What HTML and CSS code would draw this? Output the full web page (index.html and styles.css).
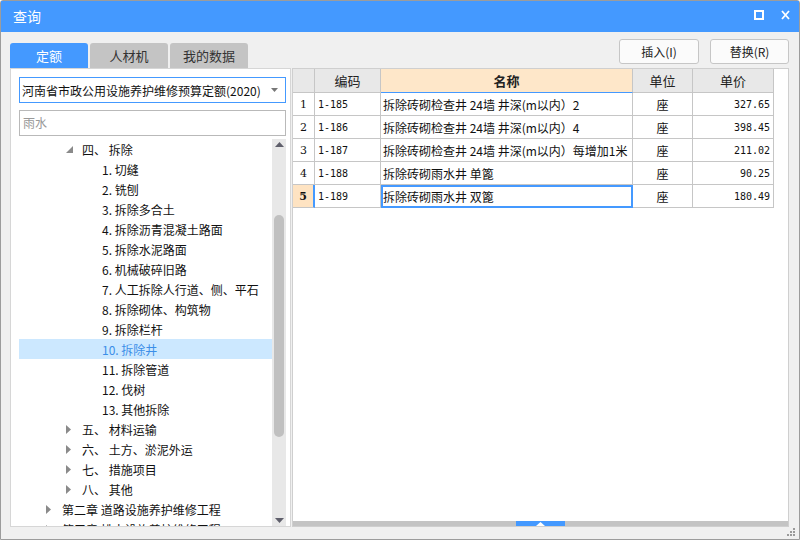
FILE: index.html
```html
<!DOCTYPE html>
<html lang="zh-CN">
<head>
<meta charset="utf-8">
<title>查询</title>
<link rel="stylesheet" href="styles.css">
</head>
<body>
<div class="win">
  <div class="titlebar">
    <span class="title">查询</span>
    <div class="tb-btns">
      <svg width="10" height="10" viewBox="0 0 10 10"><rect x="1" y="1" width="8" height="8" fill="none" stroke="#fff" stroke-width="2"/></svg>
      <svg width="9" height="10" viewBox="0 0 9 10"><path d="M1 1 L8 9 M8 1 L1 9" stroke="#fff" stroke-width="1.8" fill="none"/></svg>
    </div>
  </div>

  <div class="toolbar">
    <div class="tabs">
      <div class="tab active">定额</div>
      <div class="tab">人材机</div>
      <div class="tab">我的数据</div>
    </div>
    <div class="actions">
      <button class="btn btn-insert">插入(I)</button>
      <button class="btn">替换(R)</button>
    </div>
  </div>

  <div class="main">
    <div class="left">
      <div class="select">
        <span class="select-text">河南省市政公用设施养护维修预算定额(2020)</span>
        <svg class="select-arrow" width="7" height="4" viewBox="0 0 7 4"><path d="M0 0 H7 L3.5 4 Z" fill="#777"/></svg>
      </div>
      <div class="search">雨水</div>
      <div class="tree-wrap">
        <div class="tree">
          <div class="row lv2"><span class="arr"><svg width="7" height="7" viewBox="0 0 7 7"><path d="M7 0 V7 H0 Z" fill="#8a8a8a"/></svg></span><span>四、 拆除</span></div>
          <div class="row lv3">1. 切缝</div>
          <div class="row lv3">2. 铣刨</div>
          <div class="row lv3">3. 拆除多合土</div>
          <div class="row lv3">4. 拆除沥青混凝土路面</div>
          <div class="row lv3">5. 拆除水泥路面</div>
          <div class="row lv3">6. 机械破碎旧路</div>
          <div class="row lv3">7. 人工拆除人行道、侧、平石</div>
          <div class="row lv3">8. 拆除砌体、构筑物</div>
          <div class="row lv3">9. 拆除栏杆</div>
          <div class="row lv3 sel">10. 拆除井</div>
          <div class="row lv3">11. 拆除管道</div>
          <div class="row lv3">12. 伐树</div>
          <div class="row lv3">13. 其他拆除</div>
          <div class="row lv2"><span class="arr"><svg width="5" height="9" viewBox="0 0 5 9"><path d="M0 0 L5 4.5 L0 9 Z" fill="#8a8a8a"/></svg></span><span>五、 材料运输</span></div>
          <div class="row lv2"><span class="arr"><svg width="5" height="9" viewBox="0 0 5 9"><path d="M0 0 L5 4.5 L0 9 Z" fill="#8a8a8a"/></svg></span><span>六、 土方、淤泥外运</span></div>
          <div class="row lv2"><span class="arr"><svg width="5" height="9" viewBox="0 0 5 9"><path d="M0 0 L5 4.5 L0 9 Z" fill="#8a8a8a"/></svg></span><span>七、 措施项目</span></div>
          <div class="row lv2"><span class="arr"><svg width="5" height="9" viewBox="0 0 5 9"><path d="M0 0 L5 4.5 L0 9 Z" fill="#8a8a8a"/></svg></span><span>八、 其他</span></div>
          <div class="row lv1"><span class="arr"><svg width="5" height="9" viewBox="0 0 5 9"><path d="M0 0 L5 4.5 L0 9 Z" fill="#8a8a8a"/></svg></span><span>第二章 道路设施养护维修工程</span></div>
          <div class="row lv1"><span class="arr"><svg width="5" height="9" viewBox="0 0 5 9"><path d="M0 0 L5 4.5 L0 9 Z" fill="#8a8a8a"/></svg></span><span>第三章 排水设施养护维修工程</span></div>
        </div>
        <div class="vscroll">
          <svg class="vs-up" width="9" height="5" viewBox="0 0 9 5"><path d="M0 5 L4.5 0 L9 5 Z" fill="#5f5f6b"/></svg>
          <div class="vs-thumb"></div>
          <div class="vs-fill"></div>
          <svg class="vs-down" width="9" height="5" viewBox="0 0 9 5"><path d="M0 0 L9 0 L4.5 5 Z" fill="#5f5f6b"/></svg>
        </div>
      </div>
    </div>

    <div class="right">
      <div class="grid">
        <div class="c h num"></div>
        <div class="c h">编码</div>
        <div class="c h name-h">名称</div>
        <div class="c h">单位</div>
        <div class="c h">单价</div>

        <div class="c num">1</div>
        <div class="c code">1-185</div>
        <div class="c name">拆除砖砌检查井 24墙 井深(m以内）2</div>
        <div class="c unit">座</div>
        <div class="c price">327.65</div>

        <div class="c num">2</div>
        <div class="c code">1-186</div>
        <div class="c name">拆除砖砌检查井 24墙 井深(m以内）4</div>
        <div class="c unit">座</div>
        <div class="c price">398.45</div>

        <div class="c num">3</div>
        <div class="c code">1-187</div>
        <div class="c name">拆除砖砌检查井 24墙 井深(m以内）每增加1米</div>
        <div class="c unit">座</div>
        <div class="c price">211.02</div>

        <div class="c num">4</div>
        <div class="c code">1-188</div>
        <div class="c name">拆除砖砌雨水井 单篦</div>
        <div class="c unit">座</div>
        <div class="c price">90.25</div>

        <div class="c num cur">5</div>
        <div class="c code">1-189</div>
        <div class="c name focus">拆除砖砌雨水井 双篦</div>
        <div class="c unit">座</div>
        <div class="c price">180.49</div>
      </div>
      <div class="right-fill"></div>
      <div class="hscroll">
        <div class="hs-thumb"><svg width="9" height="4" viewBox="0 0 9 4"><path d="M0 4 L4.5 0 L9 4 Z" fill="#fff"/></svg></div>
      </div>
    </div>
  </div>

  <div class="footer">
    <svg width="9" height="9" viewBox="0 0 9 9" fill="#9a9a9a">
      <rect x="6" y="0" width="2" height="2"/>
      <rect x="3" y="3" width="2" height="2"/><rect x="6" y="3" width="2" height="2"/>
      <rect x="0" y="6" width="2" height="2"/><rect x="3" y="6" width="2" height="2"/><rect x="6" y="6" width="2" height="2"/>
    </svg>
  </div>
</div>
</body>
</html>
```

FILE: styles.css
```css
* { box-sizing: border-box; }
html, body { margin: 0; padding: 0; }
body {
  width: 800px;
  height: 540px;
  overflow: hidden;
  font-family: "Noto Sans CJK SC", "Liberation Sans", sans-serif;
  font-size: 12px;
  color: #1a1a1a;
}
.win {
  width: 800px;
  height: 540px;
  border: 1px solid #9c9c9c;
  border-radius: 3px 3px 0 0;
  background: #f0f0f0;
  display: flex;
  flex-direction: column;
}
.titlebar {
  height: 31px;
  background: #4499ff;
  display: flex;
  align-items: center;
  justify-content: space-between;
  padding: 0 9px 0 12px;
}
.title {
  color: #fff;
  font-size: 14px;
  line-height: 14px;
  margin-top: -1px;
}
.tb-btns {
  display: flex;
  align-items: center;
  gap: 17px;
  margin-top: -4px;
}
.toolbar {
  height: 36px;
  display: flex;
  justify-content: space-between;
  padding: 0 10px 0 9px;
}
.tabs {
  display: flex;
  gap: 2px;
  margin-top: 11px;
}
.tab {
  width: 78px;
  height: 25px;
  background: #c4c4c4;
  border-radius: 3px 3px 0 0;
  color: #333;
  font-size: 13px;
  line-height: 25px;
  text-align: center;
}
.tab.active {
  background: #4499ff;
  color: #fff;
}
.actions {
  display: flex;
  gap: 11px;
  margin-top: 7px;
}
.btn {
  width: 79px;
  height: 25px;
  border: 1px solid #c6c6c6;
  border-radius: 3px;
  background: #fbfbfb;
  font-family: "Noto Sans CJK SC", "Liberation Sans", sans-serif;
  font-size: 12px;
  color: #222;
  padding: 0;
}
.btn-insert { width: 80px; }
.main {
  height: 459px;
  display: flex;
  gap: 1px;
  padding: 0 10px 0 9px;
}
.left {
  width: 281px;
  background: #fff;
  border: 1px solid #d6d6d6;
  display: flex;
  flex-direction: column;
  padding: 8px 0 0 8px;
}
.select {
  width: 267px;
  height: 26px;
  border: 1px solid #4499ff;
  display: flex;
  align-items: center;
  justify-content: space-between;
  padding: 0 7px 0 2px;
  font-size: 12px;
  color: #111;
}
.select-text { white-space: nowrap; }
.search {
  width: 267px;
  height: 26px;
  margin-top: 7px;
  border: 1px solid #b9b9b9;
  padding: 0 3px;
  line-height: 24px;
  color: #999;
  font-size: 12px;
}
.tree-wrap {
  flex: 1;
  min-height: 0;
  margin-top: 3px;
  display: flex;
  overflow: hidden;
}
.tree {
  width: 253px;
  overflow: hidden;
}
.row {
  height: 20px;
  display: flex;
  align-items: center;
  white-space: nowrap;
  font-size: 12px;
  color: #111;
}
.row.lv1 { padding-left: 27px; }
.row.lv2 { padding-left: 47px; }
.row.lv3 { padding-left: 83px; }
.arr {
  width: 16px;
  display: flex;
  align-items: center;
}
.row.sel {
  background: #cce8ff;
  color: #3b8ee8;
}
.vscroll {
  width: 14px;
  background: #e8e8e8;
  display: flex;
  flex-direction: column;
  align-items: center;
}
.vs-up { margin-top: 3px; }
.vs-thumb {
  width: 10px;
  height: 222px;
  margin-top: 68px;
  background: #c0c0c0;
  border-radius: 5px;
}
.vs-fill { flex: 1; }
.vs-down { margin-bottom: 3px; }
.right {
  width: 497px;
  background: #fff;
  border: 1px solid #cfcfcf;
  display: flex;
  flex-direction: column;
}
.grid {
  display: grid;
  grid-template-columns: 22px 66px 252px 60px 81px;
  grid-template-rows: 24px repeat(5, 23px);
  width: 481px;
}
.c {
  border-right: 1px solid #c6c6c6;
  border-bottom: 1px solid #c6c6c6;
  display: flex;
  align-items: center;
  white-space: nowrap;
  overflow: hidden;
  font-size: 12px;
  color: #111;
}
.c.h {
  background: #e8e8e8;
  justify-content: center;
  font-size: 13px;
  color: #222;
}
.c.h.name-h {
  background: #fee7c9;
  font-weight: bold;
  border-bottom: 1px solid #4499ff;
}
.c.num {
  justify-content: center;
  background: #fff;
  font-family: "DejaVu Serif", "Liberation Serif", serif;
  font-size: 11px;
}
.c.h.num { background: #e8e8e8; }
.c.num.cur {
  background: #fee3c2;
  font-weight: bold;
  border-right: 2px solid #4499ff;
}
.c.code {
  padding-left: 3px;
  font-family: "DejaVu Sans Mono", "Liberation Mono", monospace;
  font-size: 10px;
}
.c.name {
  padding-left: 2px;
  font-size: 12px;
}
.c.name.focus {
  outline: 2px solid #4499ff;
  outline-offset: -2px;
}
.c.unit { justify-content: center; }
.c.price {
  justify-content: flex-end;
  padding-right: 3px;
  font-family: "DejaVu Sans Mono", "Liberation Mono", monospace;
  font-size: 10px;
}
.right-fill { flex: 1; }
.hscroll {
  height: 5px;
  background: #c4c4c4;
  display: flex;
  justify-content: flex-start;
  padding-left: 223px;
}
.hs-thumb {
  width: 49px;
  height: 5px;
  background: #4499ff;
  display: flex;
  justify-content: center;
  align-items: flex-start;
  padding-top: 1px;
}
.footer {
  height: 12px;
  display: flex;
  justify-content: flex-end;
  align-items: flex-start;
  padding: 1px 3px 0 0;
}
```
